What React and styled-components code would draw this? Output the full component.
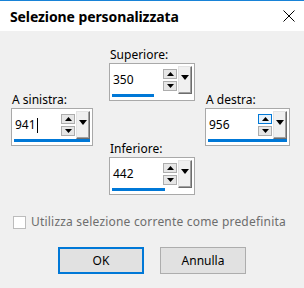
import styled, { createGlobalStyle } from "styled-components";

const GlobalStyle = createGlobalStyle`
  html, body {
    margin: 0;
    padding: 0;
    background: #f0f0f0;
  }
  body {
    font-family: "Noto Sans", "Open Sans", sans-serif;
    font-size: 12px;
    color: #000;
  }
`;

const Window = styled.div`
  width: 304px;
  height: 288px;
  box-sizing: border-box;
  background: #f0f0f0;
  border-top: 1px solid #1883d7;
  display: flex;
  flex-direction: column;
`;

const TitleBar = styled.div`
  height: 30px;
  background: #fff;
  display: flex;
  align-items: center;
  justify-content: space-between;
  padding: 0 9px 0 10px;
`;

const Title = styled.h1`
  margin: 0;
  font-size: 14px;
  font-weight: 700;
  letter-spacing: -0.1px;
`;

const Body = styled.div`
  padding: 16px 11px 0;
  display: flex;
  flex-direction: column;
`;

const Fields = styled.div`
  display: flex;
  align-items: center;
`;

const Column = styled.div`
  display: flex;
  flex-direction: column;
  gap: 40px;
  margin: 0 10px 0 16px;
`;

const Field = styled.div`
  display: flex;
  flex-direction: column;
  margin-bottom: ${(p) => p.$lift || 0}px;
`;

const Label = styled.label`
  height: 16px;
  line-height: 16px;
  padding-left: 1px;
`;

const Box = styled.div`
  width: ${(p) => p.$w}px;
  height: 38px;
  box-sizing: border-box;
  border: 1px solid #a9a9a9;
  background: #fff;
  padding: 2px 2px 3px;
  display: grid;
  grid-template-columns: 1fr 14px 14px;
  grid-template-rows: 28px 3px;
  column-gap: 1px;
`;

const Value = styled.div`
  align-self: center;
  padding-left: 1px;
  font-size: 12px;
  line-height: 16px;
  display: flex;
  align-items: center;
`;

const Caret = styled.span`
  display: inline-block;
  width: 1px;
  height: 15px;
  background: #000;
  margin-left: 1px;
`;

const Spin = styled.div`
  align-self: center;
  display: flex;
  flex-direction: column;
  gap: 2px;
`;

const SpinButton = styled.div`
  height: 10px;
  box-sizing: border-box;
  border: 1px solid ${(p) => (p.$hot ? "#0078d7" : "#adadad")};
  background: ${(p) => (p.$hot ? "#e5f1fb" : "#e6e6e6")};
  display: flex;
  align-items: center;
  justify-content: center;
`;

const DropButton = styled.div`
  box-sizing: border-box;
  border: 1px solid;
  border-color: #e3e3e3 #6d6d6d #6d6d6d #e3e3e3;
  box-shadow: inset -1px -1px 0 #a0a0a0;
  background: #f0f0f0;
  display: flex;
  justify-content: center;
  padding-top: 8px;
`;

const Bar = styled.div`
  grid-column: 1 / -1;
  height: 3px;
  background: #0078d7;
`;

const CheckRow = styled.label`
  margin-top: 19px;
  display: flex;
  align-items: center;
  gap: 5px;
  color: #6d6d6d;
  line-height: 16px;
  letter-spacing: 0.2px;
  padding-left: 2px;
`;

const CheckBox = styled.span`
  width: 13px;
  height: 13px;
  box-sizing: border-box;
  border: 1px solid #bcbcbc;
  background: #fff;
`;

const Buttons = styled.div`
  margin-top: 17px;
  display: flex;
  justify-content: center;
  gap: 16px;
`;

const Button = styled.button`
  width: 86px;
  height: 27px;
  box-sizing: border-box;
  font: inherit;
  color: #000;
  background: #e1e1e1;
  border: ${(p) => (p.$default ? "2px solid #0078d7" : "1px solid #adadad")};
  padding: 0;
`;

const Up = () => (
  <svg width="7" height="4" viewBox="0 0 7 4">
    <polygon points="0,4 3.5,0 7,4" fill="#000" />
  </svg>
);

const Down = ({ w = 7, h = 4 }) => (
  <svg width={w} height={h} viewBox={`0 0 ${w} ${h}`}>
    <polygon points={`0,0 ${w},0 ${w / 2},${h}`} fill="#000" />
  </svg>
);

const SpinField = ({ label, value, width, pct, caret, hot, lift }) => (
  <Field $lift={lift}>
    <Label>{label}</Label>
    <Box $w={width}>
      <Value>
        {value}
        {caret && <Caret />}
      </Value>
      <Spin>
        <SpinButton $hot={hot}>
          <Up />
        </SpinButton>
        <SpinButton>
          <Down />
        </SpinButton>
      </Spin>
      <DropButton>
        <Down w={8} h={5} />
      </DropButton>
      <Bar style={{ width: `${pct}%` }} />
    </Box>
  </Field>
);

export default function App() {
  return (
    <>
      <GlobalStyle />
      <Window>
        <TitleBar>
          <Title>Selezione personalizzata</Title>
          <svg width="12" height="12" viewBox="0 0 12 12">
            <path d="M0.5 0.5 L11.5 11.5 M11.5 0.5 L0.5 11.5" stroke="#000" strokeWidth="1" fill="none" />
          </svg>
        </TitleBar>
        <Body>
          <Fields>
            <SpinField label="A sinistra:" value="941" width={82} pct={100} caret lift={4} />
            <Column>
              <SpinField label="Superiore:" value="350" width={86} pct={52} />
              <SpinField label="Inferiore:" value="442" width={86} pct={66} />
            </Column>
            <SpinField label="A destra:" value="956" width={85} pct={100} hot lift={4} />
          </Fields>
          <CheckRow>
            <CheckBox />
            Utilizza selezione corrente come predefinita
          </CheckRow>
          <Buttons>
            <Button $default>OK</Button>
            <Button>Annulla</Button>
          </Buttons>
        </Body>
      </Window>
    </>
  );
}
